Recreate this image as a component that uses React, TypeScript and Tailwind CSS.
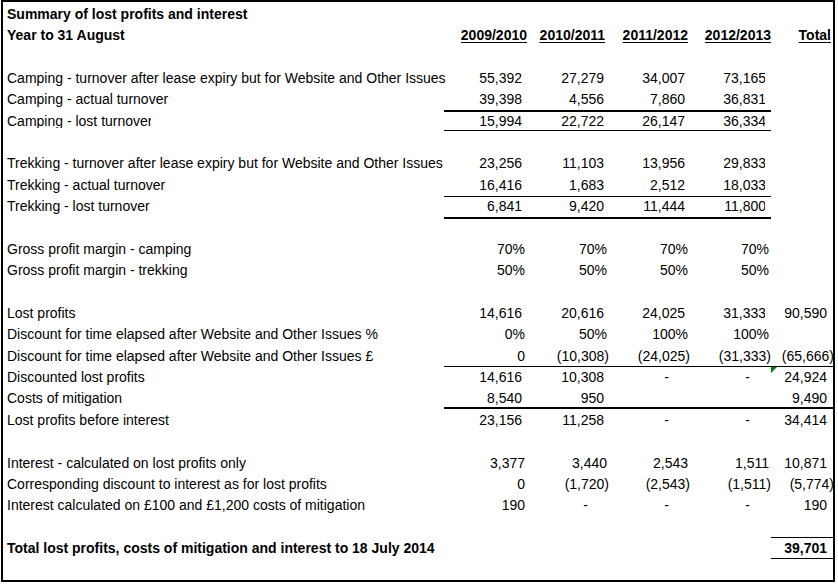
import React from 'react';

type Row = {
  label?: string;
  bold?: boolean;
  vals?: string[];
  total?: string;
  flush?: boolean;
  clipLabel?: boolean;
  lc?: string;
  lt?: string;
  flag?: boolean;
};

const GRID = 'grid grid-cols-[441px_83px_82px_81px_81px_62px] h-[21.36px]';

const rows: Row[] = [
  { label: 'Summary of lost profits and interest', bold: true },
  { label: 'Year to 31 August', bold: true },
  {},
  { label: 'Camping - turnover after lease expiry but for Website and Other Issues', vals: ['55,392', '27,279', '34,007', '73,165'] },
  { label: 'Camping - actual turnover', vals: ['39,398', '4,556', '7,860', '36,831'] },
  {
    label: 'Camping - lost turnover',
    vals: ['15,994', '22,722', '26,147', '36,334'],
    clipLabel: true,
    lc: 'shadow-[inset_0_2px_0_0_#000,inset_0_-1px_0_0_#000]',
  },
  {},
  { label: 'Trekking - turnover after lease expiry but for Website and Other Issues', vals: ['23,256', '11,103', '13,956', '29,833'] },
  { label: 'Trekking - actual turnover', vals: ['16,416', '1,683', '2,512', '18,033'] },
  { label: 'Trekking - lost turnover', vals: ['6,841', '9,420', '11,444', '11,800'], lc: 'shadow-[inset_0_1px_0_0_#000]' },
  { lc: 'shadow-[inset_0_2px_0_0_#000]' },
  { label: 'Gross profit margin - camping', vals: ['70%', '70%', '70%', '70%'] },
  { label: 'Gross profit margin - trekking', vals: ['50%', '50%', '50%', '50%'] },
  {},
  { label: 'Lost profits', vals: ['14,616', '20,616', '24,025', '31,333'], total: '90,590' },
  { label: 'Discount for time elapsed after Website and Other Issues %', vals: ['0%', '50%', '100%', '100%'] },
  { label: 'Discount for time elapsed after Website and Other Issues £', vals: ['0', '(10,308)', '(24,025)', '(31,333)'], total: '(65,666)' },
  {
    label: 'Discounted lost profits',
    vals: ['14,616', '10,308', '-', '-'],
    total: '24,924',
    lc: 'shadow-[inset_0_1px_0_0_#000]',
    lt: 'shadow-[inset_0_1px_0_0_#000]',
    flag: true,
  },
  {
    label: 'Costs of mitigation',
    vals: ['8,540', '950', '', ''],
    total: '9,490',
    lc: 'shadow-[inset_0_-2px_0_0_#000]',
    lt: 'shadow-[inset_0_-2px_0_0_#000]',
  },
  { label: 'Lost profits before interest', vals: ['23,156', '11,258', '-', '-'], total: '34,414' },
  {},
  { label: 'Interest - calculated on lost profits only', vals: ['3,377', '3,440', '2,543', '1,511'], total: '10,871', flush: true },
  { label: 'Corresponding discount to interest as for lost profits', vals: ['0', '(1,720)', '(2,543)', '(1,511)'], total: '(5,774)', flush: true },
  { label: 'Interest calculated on £100 and £1,200 costs of mitigation', vals: ['190', '-', '-', '-'], total: '190', flush: true },
  {},
  {
    label: 'Total lost profits, costs of mitigation and interest to 18 July 2014',
    bold: true,
    total: '39,701',
    lt: 'shadow-[inset_0_1px_0_0_#000,inset_0_-1px_0_0_#000]',
  },
  {},
];

const headers = [
  { t: '2009/2010', pad: 'pr-0' },
  { t: '2010/2011', pad: 'pr-[4px]' },
  { t: '2011/2012', pad: 'pr-[2px]' },
  { t: '2012/2013', pad: 'pr-0' },
];

function ValueCell({ v, col, flush, line }: { v: string; col: number; flush?: boolean; line?: string }) {
  const paren = v.startsWith('(');
  const pct = v.endsWith('%');
  const dash = v === '-';
  const plain = flush || v === '0';

  let pad = 'pr-[5px]';
  if (paren) pad = 'pr-0';
  else if (pct) pad = 'pr-[2px]';
  else if (dash) pad = 'pr-[21px]';
  else if (plain) pad = 'pr-[2px]';

  const clipped = col === 3 && v !== '' && !paren && !pct && !dash && !plain;

  return (
    <div className={`flex items-center justify-end whitespace-nowrap ${clipped ? 'pr-[6px]' : pad} ${line || ''}`}>
      {clipped ? (
        <div className="overflow-hidden">
          <span className="relative left-px">{v}</span>
        </div>
      ) : (
        v
      )}
    </div>
  );
}

function TotalCell({ v, bold, line, flag }: { v?: string; bold?: boolean; line?: string; flag?: boolean }) {
  const paren = !!v && v.startsWith('(');
  return (
    <div
      className={`relative flex items-center justify-end whitespace-nowrap ${paren ? '-mr-px pr-0' : 'pr-[6px]'} ${bold ? 'font-bold' : ''} ${line || ''}`}
    >
      {flag && (
        <svg className="absolute left-0 top-[1px]" width="6" height="6" viewBox="0 0 6 6">
          <polygon points="0,0 6,0 0,6" fill="#00800c" />
        </svg>
      )}
      {v}
    </div>
  );
}

export default function App() {
  return (
    <div className="bg-white w-[838px] h-[584px]">
      <div className="ml-px w-[834px] h-[582px] border-2 border-black overflow-hidden pt-[1.3px] font-['Liberation_Sans',Arial,sans-serif] text-[14px] leading-none text-black">
        {rows.map((r, i) => (
          <div key={i} className={GRID}>
            <div className={`flex items-center pl-[4px] whitespace-nowrap ${r.bold ? 'font-bold' : ''}`}>
              {r.clipLabel ? <div className="w-[144px] overflow-hidden">{r.label}</div> : r.label}
            </div>
            {i === 1
              ? headers.map((h) => (
                  <div key={h.t} className={`flex items-center justify-end font-bold underline underline-offset-2 ${h.pad}`}>
                    {h.t}
                  </div>
                ))
              : [0, 1, 2, 3].map((c) => (
                  <ValueCell key={c} v={r.vals ? r.vals[c] : ''} col={c} flush={r.flush} line={r.lc} />
                ))}
            {i === 1 ? (
              <div className="flex items-center justify-end pr-[2px] font-bold underline underline-offset-2">Total</div>
            ) : (
              <TotalCell v={r.total} bold={r.bold} line={r.lt} flag={r.flag} />
            )}
          </div>
        ))}
      </div>
    </div>
  );
}
